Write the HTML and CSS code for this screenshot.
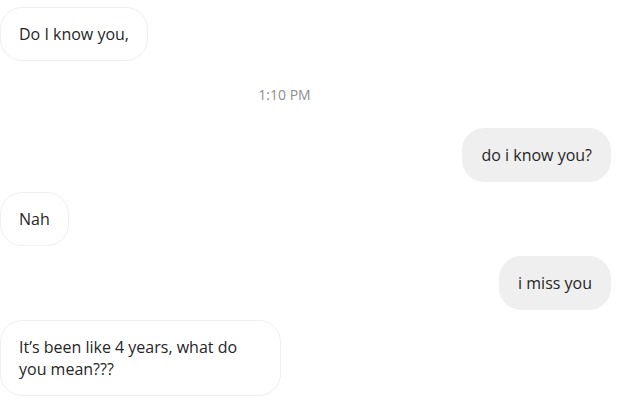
FILE: index.html
```html
<!DOCTYPE html>
<html>

<head>
    <meta name="viewport" content="width=device-width, initial-scale=1.0" />
    <title>Messages</title>
    <link rel="stylesheet" href="styles.css">
</head>

<body>
    <div class="thread">
        <!-- MESSAGES -->
        <div class="msg-row">
            <div class="msg-body-other">Do I know you,</div>
        </div>

        <div class="msg-time">1:10 PM</div>

        <div class="msg-row msg-by-me">
            <div class="msg-body-me">do i know you?</div>
        </div>
        <div class="msg-row">
            <div class="msg-body-other">Nah</div>
        </div>
        <div class="msg-row msg-by-me">
            <div class="msg-body-me">i miss you</div>
        </div>
        <div class="msg-row">
            <div class="msg-body-other">It’s been like 4 years, what do you mean???</div>
        </div>
    </div>
</body>

</html>
```

FILE: styles.css
```css
body {
    margin: 0;
    background-color: #fff;
    color: #262626;
    font-family: "Open Sans", "Noto Sans", Arial, sans-serif;
}

.thread {
    display: flex;
    flex-direction: column;
    gap: 10px;
    padding: 7px 12px 0 0;
}

.msg-row {
    display: flex;
}

.msg-by-me {
    justify-content: flex-end;
}

.msg-body-other,
.msg-body-me {
    box-sizing: border-box;
    max-width: 281px;
    padding: 15px 18px;
    border: 1px solid #efefef;
    border-radius: 22px;
    font-size: 16px;
    line-height: 22px;
}

.msg-body-other {
    background-color: #fff;
}

.msg-body-me {
    background-color: #efefef;
}

.msg-time {
    padding: 14px 42px 14px 0;
    text-align: center;
    font-size: 14px;
    line-height: 19px;
    color: #8e8e8e;
}
```
